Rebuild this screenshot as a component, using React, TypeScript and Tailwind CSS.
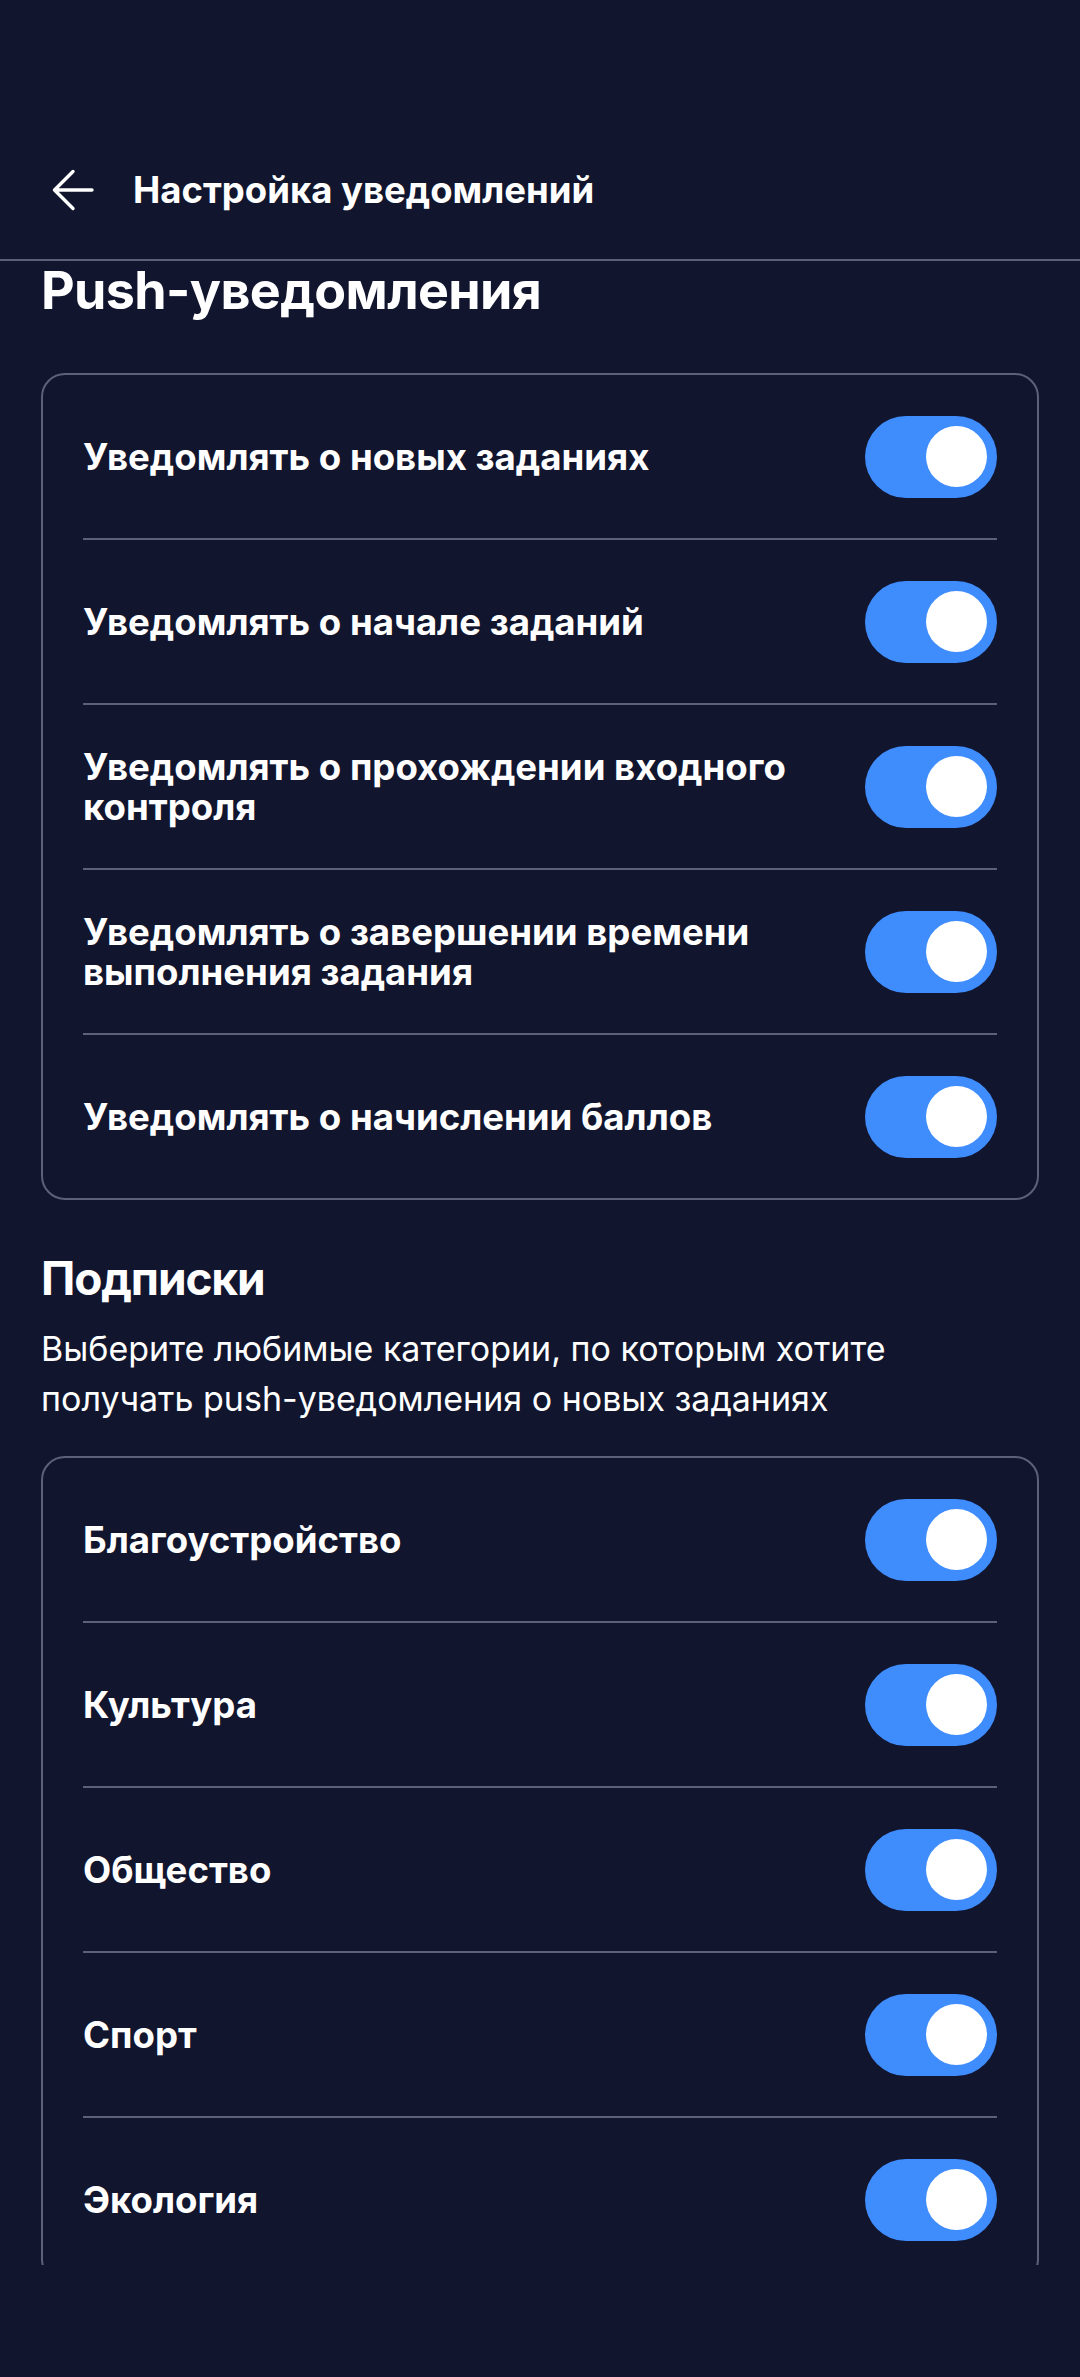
import { useState } from "react";

const pushItems = [
  "Уведомлять о новых заданиях",
  "Уведомлять о начале заданий",
  "Уведомлять о прохождении входного контроля",
  "Уведомлять о завершении времени выполнения задания",
  "Уведомлять о начислении баллов",
];

const categories = ["Благоустройство", "Культура", "Общество", "Спорт", "Экология"];

function Toggle({ on, onChange }: { on: boolean; onChange: () => void }) {
  return (
    <button
      type="button"
      onClick={onChange}
      className={`flex h-[82px] w-[132px] shrink-0 items-center rounded-full px-[10px] ${
        on ? "justify-end bg-[#3f8cfd]" : "justify-start bg-[#3a3d52]"
      }`}
    >
      <span className="h-[61px] w-[61px] rounded-full bg-white" />
    </button>
  );
}

function SettingsCard({ items }: { items: string[] }) {
  const [state, setState] = useState<boolean[]>(items.map(() => true));

  return (
    <div className="rounded-[24px] border-2 border-[#5d6077]">
      {items.map((label, i) => (
        <div key={label}>
          {i > 0 && <div className="mx-[40px] h-[2px] bg-[#5d6077]" />}
          <div className="flex h-[163px] items-center justify-between gap-8 px-[40px]">
            <p className="max-w-[720px] text-[36.6px] font-bold leading-[40px] text-white">{label}</p>
            <Toggle
              on={state[i]}
              onChange={() => setState((s) => s.map((v, j) => (j === i ? !v : v)))}
            />
          </div>
        </div>
      ))}
    </div>
  );
}

export default function App() {
  return (
    <div
      className="flex h-[2377px] w-[1080px] flex-col overflow-hidden bg-[#11152e] text-white"
      style={{ fontFamily: "Inter, 'Noto Sans', sans-serif" }}
    >
      {/* status bar space */}
      <div className="h-[130px] shrink-0" />

      {/* Header */}
      <div className="flex h-[131px] shrink-0 items-center gap-[40px] border-b-2 border-[#5d6077] pb-[9px] pl-[53px]">
        <svg width="40" height="40" viewBox="0 0 40 40" fill="none" className="overflow-visible">
          <path
            d="M39 20H1.5M20 1.5L1.5 20L20 38.5"
            stroke="white"
            strokeWidth="3.4"
            strokeLinecap="round"
            strokeLinejoin="round"
          />
        </svg>
        <h1 className="text-[36.5px] font-bold leading-none">Настройка уведомлений</h1>
      </div>

      {/* Scroll area */}
      <div className="h-[2004px] shrink-0 overflow-hidden px-[41px]">
        <h2 className="text-[52px] font-bold leading-[60px] tracking-[-0.012em]">Push-уведомления</h2>

        <div className="mt-[52px]">
          <SettingsCard items={pushItems} />
        </div>

        <h2 className="mt-[50px] text-[46px] font-bold leading-[56px] tracking-tight">Подписки</h2>
        <p className="mt-[18px] max-w-[900px] text-[34px] leading-[50px]">
          Выберите любимые категории, по которым хотите получать push-уведомления о новых заданиях
        </p>

        <div className="mt-[32px]">
          <SettingsCard items={categories} />
        </div>
      </div>
    </div>
  );
}
